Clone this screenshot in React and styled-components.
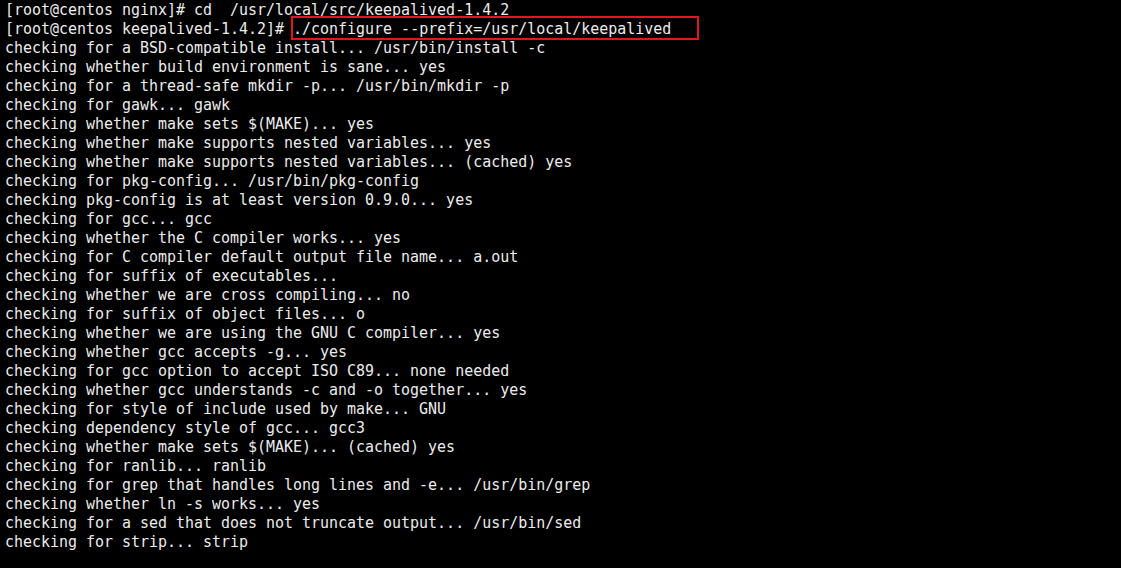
import React from 'react';
import styled, { createGlobalStyle } from 'styled-components';

const GlobalStyle = createGlobalStyle`
    html, body {
        margin: 0;
        padding: 0;
        background: #000;
    }
`;

const Terminal = styled.div`
    width: 1121px;
    height: 568px;
    box-sizing: border-box;
    padding: 1px 5px;
    background: #000;
    color: #ececec;
    font-family: "DejaVu Sans Mono", "Liberation Mono", monospace;
    font-size: 14.96px;
    line-height: 19px;
    overflow: hidden;
`;

const Line = styled.div`
    white-space: pre;
    height: 19px;
`;

const Marked = styled.span`
    display: inline-block;
    position: relative;

    &::after {
        content: '';
        position: absolute;
        left: -2px;
        top: -4px;
        width: 408px;
        height: 24px;
        box-sizing: border-box;
        border: 2px solid #e3161f;
        pointer-events: none;
    }
`;

const output = [
    'checking for a BSD-compatible install... /usr/bin/install -c',
    'checking whether build environment is sane... yes',
    'checking for a thread-safe mkdir -p... /usr/bin/mkdir -p',
    'checking for gawk... gawk',
    'checking whether make sets $(MAKE)... yes',
    'checking whether make supports nested variables... yes',
    'checking whether make supports nested variables... (cached) yes',
    'checking for pkg-config... /usr/bin/pkg-config',
    'checking pkg-config is at least version 0.9.0... yes',
    'checking for gcc... gcc',
    'checking whether the C compiler works... yes',
    'checking for C compiler default output file name... a.out',
    'checking for suffix of executables... ',
    'checking whether we are cross compiling... no',
    'checking for suffix of object files... o',
    'checking whether we are using the GNU C compiler... yes',
    'checking whether gcc accepts -g... yes',
    'checking for gcc option to accept ISO C89... none needed',
    'checking whether gcc understands -c and -o together... yes',
    'checking for style of include used by make... GNU',
    'checking dependency style of gcc... gcc3',
    'checking whether make sets $(MAKE)... (cached) yes',
    'checking for ranlib... ranlib',
    'checking for grep that handles long lines and -e... /usr/bin/grep',
    'checking whether ln -s works... yes',
    'checking for a sed that does not truncate output... /usr/bin/sed',
    'checking for strip... strip',
];

const App = () => (
    <>
        <GlobalStyle />
        <Terminal>
            <Line>[root@centos nginx]# cd  /usr/local/src/keepalived-1.4.2</Line>
            <Line>
                [root@centos keepalived-1.4.2]# <Marked>./configure --prefix=/usr/local/keepalived</Marked>
            </Line>
            {output.map((text, i) => (
                <Line key={i}>{text}</Line>
            ))}
        </Terminal>
    </>
);

export default App;
